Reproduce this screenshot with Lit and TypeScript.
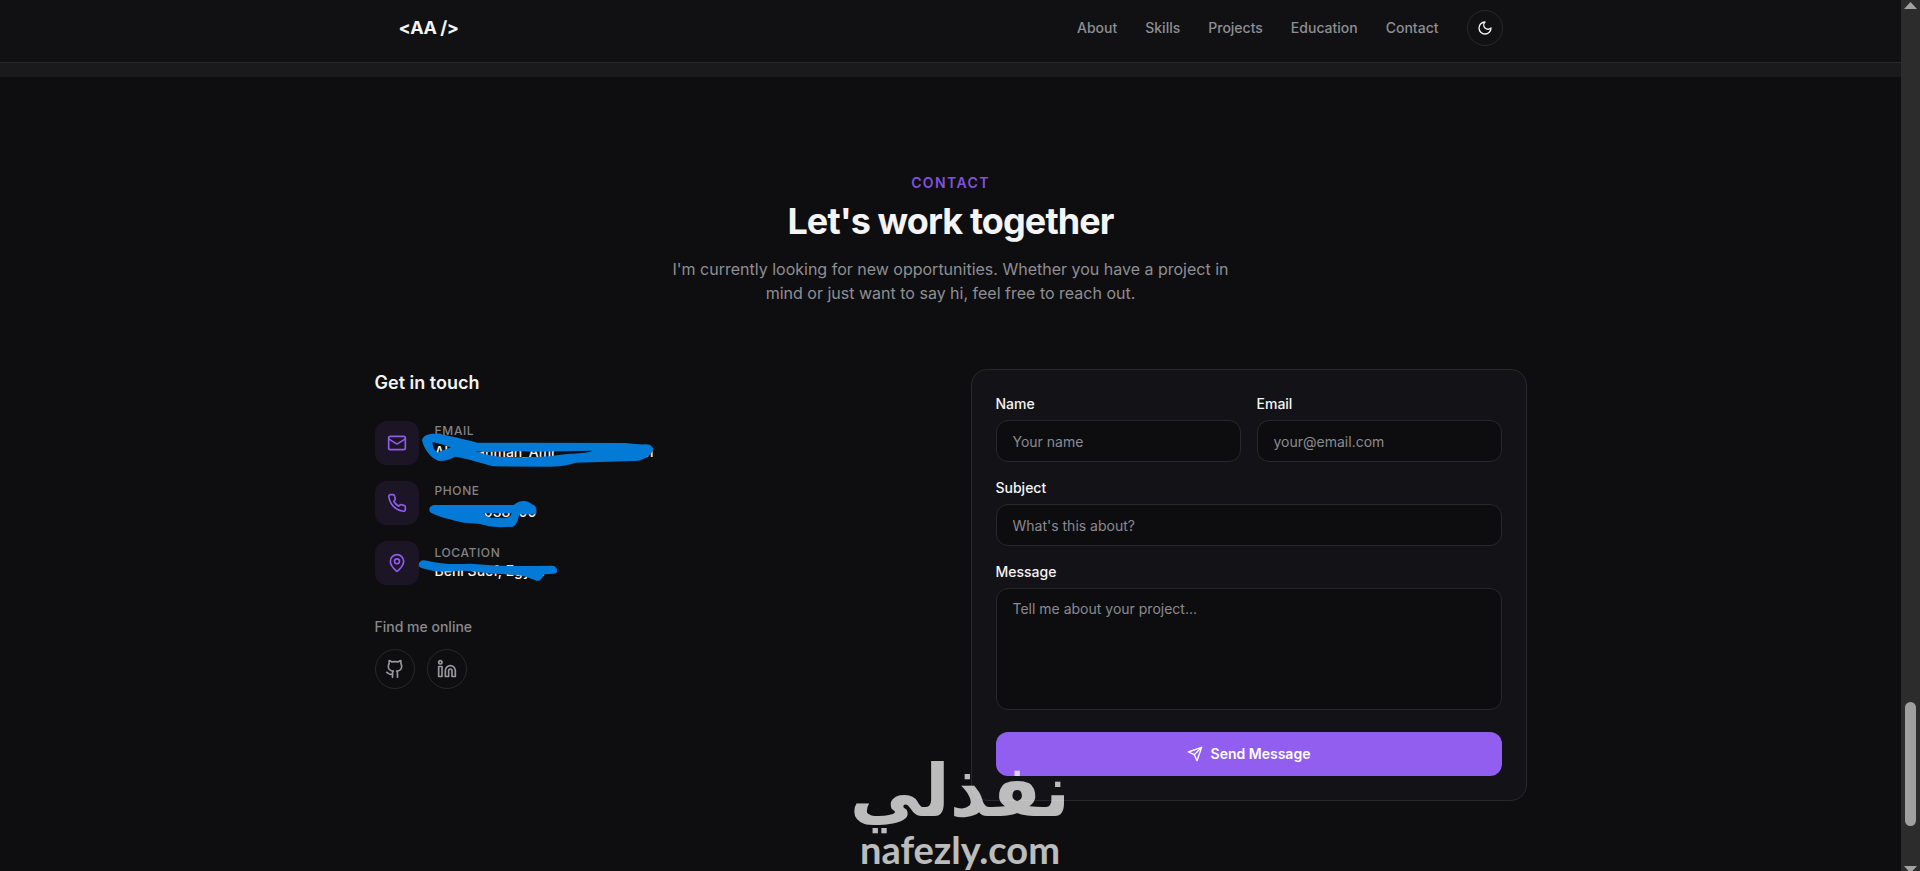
import { LitElement, html, css, svg } from "lit";
import { customElement } from "lit/decorators.js";

const icons = {
  moon: svg`<path d="M12 3a6 6 0 0 0 9 9 9 9 0 1 1-9-9Z"/>`,
  mail: svg`<rect width="20" height="16" x="2" y="4" rx="2"/><path d="m22 7-8.97 5.7a1.94 1.94 0 0 1-2.06 0L2 7"/>`,
  phone: svg`<path d="M22 16.92v3a2 2 0 0 1-2.18 2 19.79 19.79 0 0 1-8.63-3.07 19.5 19.5 0 0 1-6-6 19.79 19.79 0 0 1-3.07-8.67A2 2 0 0 1 4.11 2h3a2 2 0 0 1 2 1.72 12.84 12.84 0 0 0 .7 2.81 2 2 0 0 1-.45 2.11L8.09 9.91a16 16 0 0 0 6 6l1.27-1.27a2 2 0 0 1 2.11-.45 12.84 12.84 0 0 0 2.81.7A2 2 0 0 1 22 16.92z"/>`,
  pin: svg`<path d="M20 10c0 4.993-5.539 10.193-7.399 11.799a1 1 0 0 1-1.202 0C9.539 20.193 4 14.993 4 10a8 8 0 0 1 16 0"/><circle cx="12" cy="10" r="3"/>`,
  github: svg`<path d="M15 22v-4a4.8 4.8 0 0 0-1-3.5c3 0 6-2 6-5.5.08-1.25-.27-2.48-1-3.5.28-1.15.28-2.35 0-3.5 0 0-1 0-3 1.5-2.64-.5-5.36-.5-8 0C6 2 5 2 5 2c-.3 1.15-.3 2.35 0 3.5A5.403 5.403 0 0 0 4 9c0 3.5 3 5.5 6 5.5-.39.49-.68 1.05-.85 1.65-.17.6-.22 1.23-.15 1.85v4"/><path d="M9 18c-4.51 2-5-2-7-2"/>`,
  linkedin: svg`<path d="M16 8a6 6 0 0 1 6 6v7h-4v-7a2 2 0 0 0-4 0v7h-4v-7a6 6 0 0 1 6-6z"/><rect width="4" height="12" x="2" y="9"/><circle cx="4" cy="4" r="2"/>`,
  send: svg`<path d="m22 2-7 20-4-9-9-4Z"/><path d="M22 2 11 13"/>`,
};

const icon = (name: keyof typeof icons, size: number) => html`<svg
  class="icon" width=${size} height=${size} viewBox="0 0 24 24" aria-hidden="true"
>${icons[name]}</svg>`;

@customElement("app-root")
export class AppRoot extends LitElement {
  static styles = css`
    :host {
      display: grid;
      grid-template-columns: minmax(0, 1fr) 19px;
      height: 100vh;
      overflow: hidden;
      position: relative;
      background: #0e0e10;
      color: #f4f4f5;
      font-family: Inter, "Liberation Sans", sans-serif;
      font-size: 14px;
      line-height: 20px;
    }
    * { box-sizing: border-box; }
    h2, h3, p, dl, dd, dt, ul { margin: 0; padding: 0; }
    a { color: inherit; text-decoration: none; }
    .icon {
      display: block;
      flex: none;
      fill: none;
      stroke: currentColor;
      stroke-width: 2;
      stroke-linecap: round;
      stroke-linejoin: round;
    }
    .page { overflow: hidden; }
    .container { max-width: 1152px; margin: 0 auto; }

    header { background: #111113; border-bottom: 1px solid #29292b; }
    .bar {
      display: flex;
      align-items: center;
      justify-content: space-between;
      padding: 10px 24px 16px;
    }
    .logo { font-size: 18px; line-height: 28px; font-weight: 700; letter-spacing: -0.025em; }
    nav { display: flex; align-items: center; gap: 28px; color: #8e8e93; font-weight: 500; }
    .round {
      display: flex;
      align-items: center;
      justify-content: center;
      padding: 0;
      border: 1px solid #29292c;
      border-radius: 50%;
      background: none;
    }
    .theme { width: 36px; height: 36px; color: #f4f4f5; }
    .strip { height: 14px; background: #1a1a1c; }

    .contact { padding: 96px 0; }
    .intro { text-align: center; margin-bottom: 64px; }
    .eyebrow {
      color: #8052dc;
      font-weight: 600;
      letter-spacing: 0.1em;
      text-transform: uppercase;
    }
    h2 {
      margin: 8px 0 16px;
      font-size: 36px;
      line-height: 40px;
      font-weight: 700;
      letter-spacing: -0.025em;
    }
    .lead { max-width: 576px; margin: 0 auto; font-size: 16px; line-height: 24px; color: #8e8e93; }

    .columns { display: grid; grid-template-columns: 1fr 1fr; gap: 40px; }
    h3 { font-size: 18px; line-height: 28px; font-weight: 600; margin-bottom: 24px; }
    .details { position: relative; display: flex; flex-direction: column; gap: 16px; }
    .row { display: flex; align-items: center; gap: 16px; height: 44px; }
    .tile {
      display: flex;
      align-items: center;
      justify-content: center;
      width: 44px;
      height: 44px;
      border-radius: 12px;
      background: #1b1526;
      color: #8f5bee;
    }
    .row dt {
      font-size: 12px;
      line-height: 16px;
      font-weight: 500;
      letter-spacing: 0.05em;
      text-transform: uppercase;
      color: #828287;
    }
    .row dd { font-weight: 500; line-height: 20px; }
    .row dd.linked { height: 24px; font-size: 16px; line-height: 24px; }
    .parts { display: inline-flex; width: 219px; gap: 24px; font-size: 14px; line-height: 20px; }
    .parts .last { margin-left: auto; }
    .parts.short { width: 102px; gap: 8px; justify-content: flex-end; }
    .marker {
      position: absolute;
      left: 0;
      top: 0;
      width: 290px;
      height: 170px;
      pointer-events: none;
      overflow: visible;
      fill: #047ad7;
    }
    .online { margin: 32px 0 12px; font-weight: 500; color: #8a8a8f; }
    .social { display: flex; gap: 12px; }
    .social .round { width: 40px; height: 40px; color: #98989c; }

    form {
      display: grid;
      grid-template-columns: 1fr 1fr;
      gap: 16px;
      padding: 24px;
      border: 1px solid #29292c;
      border-radius: 16px;
      background: #131317;
    }
    .field { display: flex; flex-direction: column; gap: 6px; min-width: 0; }
    .wide { grid-column: 1 / -1; }
    label { font-weight: 500; }
    input, textarea {
      width: 100%;
      height: 42px;
      padding: 10px 16px;
      border: 1px solid #29292c;
      border-radius: 12px;
      background: #0d0d0f;
      color: inherit;
      font: inherit;
      outline: none;
    }
    textarea { display: block; height: 122px; resize: none; }
    ::placeholder { color: #8a8a8f; opacity: 1; }
    .send {
      display: flex;
      align-items: center;
      justify-content: center;
      gap: 8px;
      height: 44px;
      margin-top: 6px;
      border: 0;
      border-radius: 12px;
      background: #915eef;
      color: #fff;
      font: inherit;
      font-weight: 600;
    }

    .scroll {
      display: flex;
      flex-direction: column;
      align-items: center;
      background: #2c2c2c;
    }
    .scroll svg { display: block; flex: none; fill: #a2a2a2; }
    .before { flex: 689; }
    .thumb { flex: 124; width: 11px; border-radius: 6px; background: #9f9f9f; }
    .after { flex: 40; }

    .watermark {
      position: absolute;
      left: 0;
      right: 0;
      bottom: 0;
      display: flex;
      flex-direction: column;
      align-items: center;
      color: #fff;
      opacity: 0.72;
      pointer-events: none;
    }
    .arabic { font: 700 72px/72px "DejaVu Sans", sans-serif; }
    .domain { font: 700 38px/44px Lato, sans-serif; }
  `;

  render() {
    return html`
      <div class="page">
        <header>
          <div class="container bar">
            <a class="logo" href="#home">&lt;AA /&gt;</a>
            <nav>
              ${["About", "Skills", "Projects", "Education", "Contact"].map(
                (t) => html`<a href="#${t.toLowerCase()}">${t}</a>`
              )}
              <button class="round theme" aria-label="Toggle theme">${icon("moon", 16)}</button>
            </nav>
          </div>
        </header>
        <div class="strip"></div>

        <section class="contact container">
          <div class="intro">
            <p class="eyebrow">Contact</p>
            <h2>Let's work together</h2>
            <p class="lead">
              I'm currently looking for new opportunities. Whether you have a
              project in mind or just want to say hi, feel free to reach out.
            </p>
          </div>
          <div class="columns">
            <div>
              <h3>Get in touch</h3>
              <div class="details">
                <div class="row">
                  <span class="tile">${icon("mail", 20)}</span>
                  <dl>
                    <dt>Email</dt>
                    <dd class="linked"><a class="parts" href="#email"><span>Ab</span><span>ahman_Amr</span><span class="last">m</span></a></dd>
                  </dl>
                </div>
                <div class="row">
                  <span class="tile">${icon("phone", 20)}</span>
                  <dl>
                    <dt>Phone</dt>
                    <dd class="linked"><a class="parts short" href="#phone"><span>038</span><span>00</span></a></dd>
                  </dl>
                </div>
                <div class="row">
                  <span class="tile">${icon("pin", 20)}</span>
                  <dl>
                    <dt>Location</dt>
                    <dd>Beni Suef, Egypt</dd>
                  </dl>
                </div>
                <svg class="marker" viewBox="44 183 870 510" aria-hidden="true">
                  <path fill-rule="evenodd" d="M185 241C187 224 212 216 250 224C285 231 330 242 352 248L795 249C820 251 840 254 858 253C876 254 882 266 876 275C865 292 845 303 815 303L645 308C615 318 590 320 560 320L400 319C370 312 330 298 285 290C270 296 255 304 235 303C210 295 190 265 185 241ZM217 246C230 250 255 255 271 262C262 268 248 268 236 277C226 280 216 262 217 246ZM345 274C400 280 440 270 520 275L695 272C690 281 610 280 590 286C550 292 480 293 430 291C400 290 370 282 345 274Z"/>
                  <path fill-rule="evenodd" d="M207 449C207 440 215 435 225 435L460 435C468 428 478 423 492 423C505 424 510 430 518 434C528 436 530 452 527 463L478 463C472 474 474 492 458 500C430 502 400 502 385 499C370 492 340 489 310 488C270 480 235 470 215 460C210 457 207 454 207 449ZM368 460L454 460C452 468 446 473 436 473L392 473C382 471 374 466 368 460Z"/>
                  <path d="M175 614C176 602 186 598 200 602C240 612 280 614 330 611C400 617 470 619 520 618L575 617C590 618 593 632 588 639C578 643 560 641 552 643C545 655 540 665 528 662C510 656 495 647 470 645L380 640C350 636 325 631 290 633C250 637 215 634 195 627C182 623 175 622 175 614Z"/>
                </svg>
              </div>
              <p class="online">Find me online</p>
              <div class="social">
                <a class="round" href="#github" aria-label="GitHub">${icon("github", 20)}</a>
                <a class="round" href="#linkedin" aria-label="LinkedIn">${icon("linkedin", 20)}</a>
              </div>
            </div>

            <form>
              <div class="field">
                <label for="name">Name</label>
                <input id="name" type="text" placeholder="Your name" />
              </div>
              <div class="field">
                <label for="email">Email</label>
                <input id="email" type="email" placeholder="your@email.com" />
              </div>
              <div class="field wide">
                <label for="subject">Subject</label>
                <input id="subject" type="text" placeholder="What's this about?" />
              </div>
              <div class="field wide">
                <label for="message">Message</label>
                <textarea id="message" placeholder="Tell me about your project..."></textarea>
              </div>
              <button class="send wide" type="button">${icon("send", 16)}Send Message</button>
            </form>
          </div>
        </section>
      </div>

      <div class="scroll" aria-hidden="true">
        <svg width="13" height="13" viewBox="0 0 13 13"><path d="M6.5 2 13 9H0Z"/></svg>
        <div class="before"></div>
        <div class="thumb"></div>
        <div class="after"></div>
        <svg width="13" height="5" viewBox="0 0 13 5"><path d="M0 0H13L8.5 5H4.5Z"/></svg>
      </div>

      <div class="watermark">
        <span class="arabic" lang="ar" dir="rtl">نفذلي</span>
        <span class="domain">nafezly.com</span>
      </div>
    `;
  }
}
